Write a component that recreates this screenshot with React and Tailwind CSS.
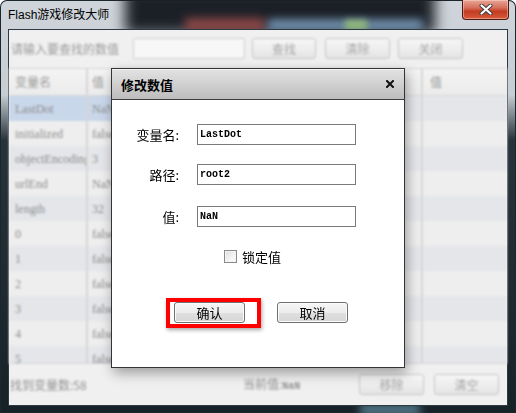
import React from "react";

const rows = [
  ["LastDot", "NaN"],
  ["initialized", "false"],
  ["objectEncoding", "3"],
  ["urlEnd", "NaN"],
  ["length", "32"],
  ["0", "false"],
  ["1", "false"],
  ["2", "false"],
  ["3", "false"],
  ["4", "false"],
  ["5", "false"],
];

// greyed-out button of the window behind the dialog
const FadedButton = ({ label, width }) => (
  <div
    className={`${width} h-[21px] flex items-center justify-center rounded-[3px] border border-[#c6c6c6] bg-[linear-gradient(180deg,#f6f6f6_0%,#eeeeee_50%,#e4e4e4_100%)] text-[12px] text-[#a6a6a6]`}
  >
    {label}
  </div>
);

const Win7Button = ({ label }) => (
  <button className="w-[71px] h-[21px] flex items-center justify-center rounded-[3px] border border-[#707070] bg-[linear-gradient(180deg,#f6f6f6_0%,#ececec_50%,#e0e0e0_51%,#d6d6d6_100%)] shadow-[inset_0_0_0_1px_#fbfbfb] text-[13px] text-black leading-none">
    {label}
  </button>
);

const Field = ({ label, value }) => (
  <div className="flex items-center h-[21px]">
    <div className="w-[67px] text-right text-[13px] text-black leading-none">{label}</div>
    <div className="ml-[18px] w-[159px] h-[21px] border border-[#7a7a7a] bg-white flex items-center px-[2px] font-['Liberation_Mono',monospace] text-[10px] font-semibold text-black">
      {value}
    </div>
  </div>
);

export default function App() {
  return (
    <div className="relative w-[516px] h-[413px] overflow-hidden rounded-t-[7px] bg-[linear-gradient(180deg,#cfd5da_0px,#c6cdd3_95px,#27333a_140px,#172228_100%)] shadow-[inset_0_0_0_1px_#1c262d] font-['Noto_Sans_CJK_SC',sans-serif]">
      {/* aero glass behind the frame */}
      <div className="absolute inset-0 overflow-hidden">
        <div className="absolute left-[125px] top-[-12px] w-[310px] h-[46px] bg-[#1b2027] blur-[7px]" />
        <div className="absolute left-[185px] top-[18px] w-[80px] h-[14px] bg-[#8a4646] blur-[5px]" />
        <div className="absolute left-[268px] top-[19px] w-[155px] h-[12px] bg-[#6e8dab] blur-[4px]" />
        <div className="absolute left-[345px] top-[20px] w-[22px] h-[10px] bg-[#90b878] blur-[3px]" />
        <div className="absolute left-[360px] top-[404px] w-[60px] h-[12px] bg-[#4f7686] blur-[4px]" />
      </div>

      {/* title bar */}
      <div className="relative h-[29px] flex items-center pl-[8px]">
        <span className="font-['Liberation_Sans','Noto_Sans_CJK_SC',sans-serif] text-[12px] text-black leading-none">
          Flash游戏修改大师
        </span>
        <div className="absolute right-[7px] top-0 w-[47px] h-[20px] rounded-b-[4px] border border-t-0 border-[#4a1a12] bg-[linear-gradient(180deg,#e8a696_0%,#d7705c_40%,#c23c22_60%,#d85a3a_100%)] shadow-[inset_0_0_0_1px_rgba(255,220,210,0.45)] flex items-center justify-center">
          <svg width="14" height="11" viewBox="0 0 14 11">
            <path d="M2.5 1.5 L11.5 9.5 M11.5 1.5 L2.5 9.5" stroke="#3a3a3a" strokeWidth="4" strokeLinecap="round" />
            <path d="M2.5 1.5 L11.5 9.5 M11.5 1.5 L2.5 9.5" stroke="#ffffff" strokeWidth="2.2" strokeLinecap="round" />
          </svg>
        </div>
      </div>

      {/* client area */}
      <div className="relative mx-[8px] h-[377px] border border-[#2e3a42] bg-[#f0f0f0]">
        <div className="h-full flex flex-col blur-[0.9px]">
          <div className="mt-[8px] h-[21px] flex items-center">
            <div className="w-[124px] pl-[2px] text-[12px] text-[#9a9a9a]">请输入要查找的数值</div>
            <div className="w-[112px] h-[21px] rounded-[2px] border border-[#cdcdcd] bg-[#f7f7f7]" />
            <div className="ml-[7px] flex gap-[9px]">
              <FadedButton label="查找" width="w-[64px]" />
              <FadedButton label="清除" width="w-[65px]" />
            </div>
            <div className="ml-[8px]">
              <FadedButton label="关闭" width="w-[65px]" />
            </div>
          </div>

          {/* variable list */}
          <div className="mt-[9px] h-[296px] border-y border-[#d4d4d4] overflow-hidden flex flex-col">
            <div className="h-[27px] shrink-0 flex border-b border-[#d8d8d8] bg-[linear-gradient(180deg,#f4f4f4_0%,#ebebeb_100%)] text-[12px] text-[#9c9c9c]">
              <div className="w-[79px] pl-[6px] flex items-center border-r-2 border-[#d6d6d6]">变量名</div>
              <div className="w-[160px] pl-[4px] flex items-center border-r-2 border-[#d6d6d6]">值</div>
              <div className="w-[175px] pl-[4px] flex items-center border-r-2 border-[#d6d6d6]">路径</div>
              <div className="flex-1 pl-[7px] flex items-center">值</div>
            </div>
            {rows.map(([name, value], i) => (
              <div
                key={name}
                className={`h-[25px] shrink-0 flex font-['Liberation_Serif',serif] text-[12px] text-[#8e8e8e] ${
                  i % 2 === 0 ? "bg-[#e4e6ea]" : "bg-[#eeeeee]"
                }`}
              >
                <div className={`w-[79px] pl-[6px] flex items-center overflow-hidden whitespace-nowrap border-r-2 border-[#d6d6d6] ${i === 0 ? "bg-[#c9d7ea]" : ""}`}>
                  {name}
                </div>
                <div className={`w-[160px] pl-[4px] flex items-center border-r-2 border-[#d6d6d6] ${i === 0 ? "bg-[#c9d7ea]" : ""}`}>
                  {value}
                </div>
                <div className="w-[175px] border-r-2 border-[#d6d6d6]" />
                <div className="flex-1" />
              </div>
            ))}
          </div>

          <div className="flex-1 flex items-center text-[12px] text-[#939393]">
            <div className="w-[234px] pl-[1px]">找到变量数:58</div>
            <div className="flex-1">
              当前值:<span className="font-['Liberation_Mono',monospace] text-[10px] font-semibold">NaN</span>
            </div>
            <div className="flex gap-[10px] pr-[8px]">
              <FadedButton label="移除" width="w-[65px]" />
              <FadedButton label="清空" width="w-[65px]" />
            </div>
          </div>
        </div>

        {/* edit dialog */}
        <div className="absolute left-[102px] top-[38px] w-[294px] h-[300px] border border-[#343434] bg-white shadow-[2px_5px_12px_rgba(0,0,0,0.35)] flex flex-col">
          <div className="h-[31px] shrink-0 flex items-center justify-between pl-[9px] pr-[10px] border-b border-[#3c3c3c] bg-[linear-gradient(180deg,#e2e2e2_0%,#d2d2d2_45%,#bdbdbd_100%)] shadow-[inset_0_1px_0_#f4f4f4]">
            <span className="text-[13px] font-bold text-black leading-none">修改数值</span>
            <svg width="8" height="8" viewBox="0 0 8 8">
              <path d="M1 1 L7 7 M7 1 L1 7" stroke="#111" strokeWidth="2" strokeLinecap="square" />
            </svg>
          </div>

          <div className="mt-[24px]">
            <Field label="变量名:" value="LastDot" />
          </div>
          <div className="mt-[19px]">
            <Field label="路径:" value="root2" />
          </div>
          <div className="mt-[21px]">
            <Field label="值:" value="NaN" />
          </div>

          <div className="mt-[23px] pl-[112px] flex items-center h-[13px]">
            <div className="w-[13px] h-[13px] border border-[#8a8a8a] bg-[linear-gradient(135deg,#dcdcdc_0%,#f8f8f8_70%)] shadow-[inset_0_0_0_1px_#f4f4f4]" />
            <span className="ml-[5px] text-[13px] text-black leading-none">锁定值</span>
          </div>

          <div className="mt-[39px] pl-[62px] flex gap-[32px]">
            <div className="relative">
              <Win7Button label="确认" />
              <div className="absolute left-[-8px] top-[-4px] w-[95px] h-[30px] border-4 border-[#ff0000] shadow-[1px_2px_4px_rgba(0,0,0,0.35)] pointer-events-none" />
            </div>
            <Win7Button label="取消" />
          </div>
        </div>
      </div>
    </div>
  );
}
